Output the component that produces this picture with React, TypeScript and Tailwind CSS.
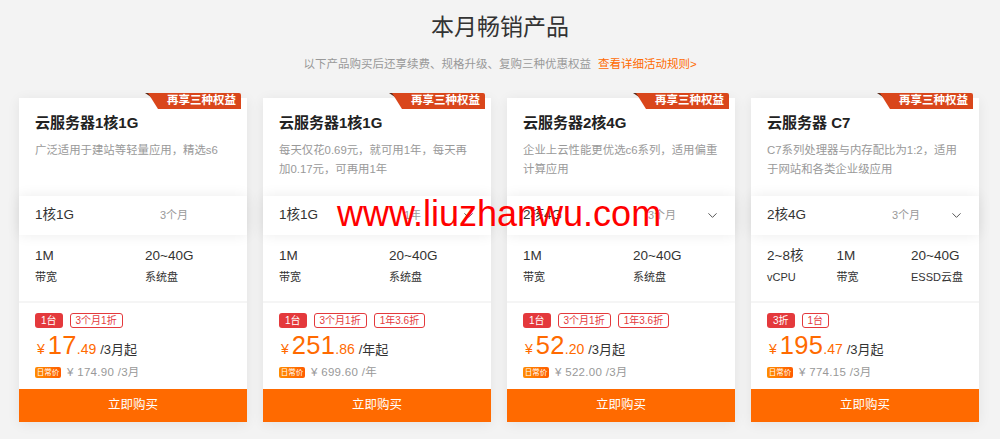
import { ChevronDown } from "lucide-react";

type Spec = { value: string; label: string; width: string };

type Product = {
  title: string;
  desc: string[];
  config: string;
  period: string;
  arrow: boolean;
  specs: Spec[];
  tags: { text: string; solid: boolean }[];
  whole: string;
  cents: string;
  unit: string;
  daily: string;
};

const products: Product[] = [
  {
    title: "云服务器1核1G",
    desc: ["广泛适用于建站等轻量应用，精选s6"],
    config: "1核1G",
    period: "3个月",
    arrow: false,
    specs: [
      { value: "1M", label: "带宽", width: "w-[110px]" },
      { value: "20~40G", label: "系统盘", width: "" },
    ],
    tags: [
      { text: "1台", solid: true },
      { text: "3个月1折", solid: false },
    ],
    whole: "17",
    cents: ".49",
    unit: "/3月起",
    daily: "¥ 174.90 /3月",
  },
  {
    title: "云服务器1核1G",
    desc: ["每天仅花0.69元，就可用1年，每天再", "加0.17元，可再用1年"],
    config: "1核1G",
    period: "1年",
    arrow: true,
    specs: [
      { value: "1M", label: "带宽", width: "w-[110px]" },
      { value: "20~40G", label: "系统盘", width: "" },
    ],
    tags: [
      { text: "1台", solid: true },
      { text: "3个月1折", solid: false },
      { text: "1年3.6折", solid: false },
    ],
    whole: "251",
    cents: ".86",
    unit: "/年起",
    daily: "¥ 699.60 /年",
  },
  {
    title: "云服务器2核4G",
    desc: ["企业上云性能更优选c6系列，适用偏重", "计算应用"],
    config: "2核4G",
    period: "3个月",
    arrow: true,
    specs: [
      { value: "1M", label: "带宽", width: "w-[110px]" },
      { value: "20~40G", label: "系统盘", width: "" },
    ],
    tags: [
      { text: "1台", solid: true },
      { text: "3个月1折", solid: false },
      { text: "1年3.6折", solid: false },
    ],
    whole: "52",
    cents: ".20",
    unit: "/3月起",
    daily: "¥ 522.00 /3月",
  },
  {
    title: "云服务器 C7",
    desc: ["C7系列处理器与内存配比为1:2，适用", "于网站和各类企业级应用"],
    config: "2核4G",
    period: "3个月",
    arrow: true,
    specs: [
      { value: "2~8核", label: "vCPU", width: "w-[72px]" },
      { value: "1M", label: "带宽", width: "w-[77px]" },
      { value: "20~40G", label: "ESSD云盘", width: "" },
    ],
    tags: [
      { text: "3折", solid: true },
      { text: "1台", solid: false },
    ],
    whole: "195",
    cents: ".47",
    unit: "/3月起",
    daily: "¥ 774.15 /3月",
  },
];

function Ribbon() {
  return (
    <div className="absolute right-[6px] top-[-5px] h-[16px] w-[96px]">
      <div className="absolute left-0 top-0 h-[6px] w-[9px] bg-[#5a2a18] [clip-path:polygon(0_0,100%_0,100%_100%)]" />
      <div className="absolute inset-0 flex items-center justify-end rounded-tr-[2px] bg-[#d9461b] pr-[5px] text-[11.5px] font-bold leading-none text-white [clip-path:polygon(3px_0,100%_0,100%_100%,13px_100%)]">
        再享三种权益
      </div>
    </div>
  );
}

function Card({ p }: { p: Product }) {
  return (
    <div className="relative flex w-[228px] flex-col bg-white shadow-[0_2px_12px_rgba(0,0,0,0.07)]">
      <Ribbon />

      <div className="h-[98px] px-[16px] pt-[13px]">
        <div className="text-[15px] font-bold leading-[24px] text-[#222]">
          {p.title}
        </div>
        <div className="mt-[6px] text-[11.4px] leading-[19px] text-[#999]">
          {p.desc.map((line) => (
            <div key={line} className="whitespace-nowrap">
              {line}
            </div>
          ))}
        </div>
      </div>

      <div className="relative z-10 flex h-[39px] items-center bg-white px-[16px] shadow-[0_0_14px_rgba(0,0,0,0.08)]">
        <span className="w-[125px] text-[13.5px] text-[#333]">{p.config}</span>
        <span className="text-[11px] text-[#999]">{p.period}</span>
        {p.arrow && (
          <ChevronDown
            className="ml-auto mr-[-1px] text-[#555]"
            size={15}
            strokeWidth={1.6}
          />
        )}
      </div>

      <div className="flex h-[66px] px-[16px] pt-[12px]">
        {p.specs.map((s) => (
          <div key={s.label} className={`${s.width} whitespace-nowrap`}>
            <div className="text-[13.5px] leading-[18px] text-[#333]">
              {s.value}
            </div>
            <div className="mt-[4px] text-[11px] leading-[16px] text-[#333]">
              {s.label}
            </div>
          </div>
        ))}
      </div>

      <div className="h-[2px] bg-[#f5f5f5]" />

      <div className="flex h-[86px] flex-col px-[16px] pt-[10px]">
        <div className="flex gap-[7px]">
          {p.tags.map((t) =>
            t.solid ? (
              <span
                key={t.text}
                className="flex h-[15px] items-center rounded-[3px] bg-[#e4393c] px-[6px] text-[10px] leading-none text-white"
              >
                {t.text}
              </span>
            ) : (
              <span
                key={t.text}
                className="flex h-[15px] items-center rounded-[3px] border border-[#e4393c] px-[5px] text-[10px] leading-none text-[#e4393c]"
              >
                {t.text}
              </span>
            ),
          )}
        </div>

        <div className="mt-[3px] flex h-[29px] items-baseline text-[#ff6a00]">
          <span className="ml-[2px] mr-[3px] text-[14px] leading-none">¥</span>
          <span className="text-[25.5px] leading-[29px] tracking-[0.3px]">
            {p.whole}
          </span>
          <span className="text-[14px] leading-none">{p.cents}</span>
          <span className="ml-[4px] text-[13px] leading-none text-[#333]">
            {p.unit}
          </span>
        </div>

        <div className="mt-[7px] flex items-center">
          <span className="flex h-[11px] w-[26px] items-center justify-center rounded-[2px] bg-gradient-to-r from-[#ff8c00] to-[#ff5c00] text-[7.5px] leading-none text-white">
            日常价
          </span>
          <span className="ml-[6px] text-[11.5px] leading-none tracking-[0.3px] text-[#999]">
            {p.daily}
          </span>
        </div>
      </div>

      <button
        type="button"
        className="h-[33px] w-full bg-[#ff6a00] text-[12.5px] text-white"
      >
        立即购买
      </button>
    </div>
  );
}

export default function App() {
  return (
    <div className="relative h-[439px] w-[1000px] overflow-hidden bg-[#f3f3f3] pt-[11px] font-['Liberation_Sans','Noto_Sans_CJK_SC',sans-serif]">
      <h2 className="text-center text-[23px] leading-[32px] text-[#333]">
        本月畅销产品
      </h2>
      <p className="mt-[13px] text-center text-[11.5px] leading-[16px] text-[#999]">
        以下产品购买后还享续费、规格升级、复购三种优惠权益
        <a className="ml-[7px] text-[#ff6a00]">查看详细活动规则&gt;</a>
      </p>

      <div className="ml-[19px] mt-[26px] flex w-[960px] gap-[16px]">
        {products.map((p, i) => (
          <Card key={i} p={p} />
        ))}
      </div>

      <div className="pointer-events-none absolute left-[337px] top-[196px] z-30 whitespace-nowrap text-[36px] leading-[36px] text-[#ff0000]">
        www.liuzhanwu.com
      </div>
    </div>
  );
}
